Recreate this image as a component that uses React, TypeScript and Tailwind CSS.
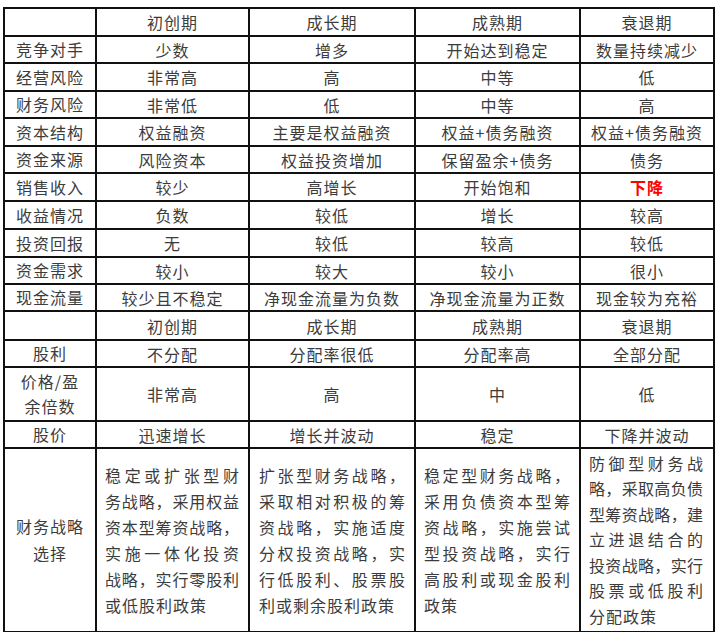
type Cell = string | { text: string; red?: boolean };

const stages = ['初创期', '成长期', '成熟期', '衰退期'];

// 各阶段对比（单行单元格）
const rows: { label: string[]; cells: Cell[] }[] = [
  { label: [''], cells: stages },
  { label: ['竞争对手'], cells: ['少数', '增多', '开始达到稳定', '数量持续减少'] },
  { label: ['经营风险'], cells: ['非常高', '高', '中等', '低'] },
  { label: ['财务风险'], cells: ['非常低', '低', '中等', '高'] },
  { label: ['资本结构'], cells: ['权益融资', '主要是权益融资', '权益+债务融资', '权益+债务融资'] },
  { label: ['资金来源'], cells: ['风险资本', '权益投资增加', '保留盈余+债务', '债务'] },
  { label: ['销售收入'], cells: ['较少', '高增长', '开始饱和', { text: '下降', red: true }] },
  { label: ['收益情况'], cells: ['负数', '较低', '增长', '较高'] },
  { label: ['投资回报'], cells: ['无', '较低', '较高', '较低'] },
  { label: ['资金需求'], cells: ['较小', '较大', '较小', '很小'] },
  { label: ['现金流量'], cells: ['较少且不稳定', '净现金流量为负数', '净现金流量为正数', '现金较为充裕'] },
  { label: [''], cells: stages },
  { label: ['股利'], cells: ['不分配', '分配率很低', '分配率高', '全部分配'] },
  { label: ['价格/盈', '余倍数'], cells: ['非常高', '高', '中', '低'] },
  { label: ['股价'], cells: ['迅速增长', '增长并波动', '稳定', '下降并波动'] },
];

// 财务战略选择：按原图逐行断开
const strategy = [
  {
    pad: 'pl-[8px] pr-[9px] leading-[26px]',
    lines: ['稳定或扩张型财', '务战略，采用权益', '资本型筹资战略，', '实施一体化投资', '战略，实行零股利', '或低股利政策'],
  },
  {
    pad: 'pl-[9px] pr-[9px] leading-[26px]',
    lines: ['扩张型财务战略，', '采取相对积极的筹', '资战略，实施适度', '分权投资战略，实', '行低股利、股票股', '利或剩余股利政策'],
  },
  {
    pad: 'pl-[8px] pr-[9px] leading-[26px]',
    lines: ['稳定型财务战略，', '采用负债资本型筹', '资战略，实施尝试', '型投资战略，实行', '高股利或现金股利', '政策'],
  },
  {
    pad: 'pl-[8px] pr-[10px] leading-[25.5px]',
    lines: ['防御型财务战', '略，采取高负债', '型筹资战略，建', '立进退结合的', '投资战略，实行', '股票或低股利', '分配政策'],
  },
];

function TextCell({ cell }: { cell: Cell }) {
  const text = typeof cell === 'string' ? cell : cell.text;
  const red = typeof cell !== 'string' && cell.red;
  return (
    <div className="bg-white flex items-center justify-center">
      <span className={red ? 'text-[#ff0000] font-bold' : ''}>{text}</span>
    </div>
  );
}

export default function App() {
  return (
    <div className="bg-white w-[718px] h-[632px] pt-[3px] pl-[3px] font-['Noto_Sans_CJK_SC',sans-serif] text-[16px] tracking-[1px] text-[#3c3c3c]">
      <div className="inline-grid bg-[#111] p-[2px] gap-[2px] grid-cols-[90px_151px_164px_163px_132px] grid-rows-[26px_25px_26px_25px_26px_25px_26px_26px_26px_25px_25px_27px_25px_52px_25px_182px]">
        {rows.map((row, ri) => (
          <div key={ri} className="contents">
            <div className="bg-white flex flex-col items-center justify-center leading-[25px]">
              {row.label.map((l, i) => (
                <span key={i}>{l}</span>
              ))}
            </div>
            {row.cells.map((c, ci) => (
              <TextCell key={ci} cell={c} />
            ))}
          </div>
        ))}

        {/* 财务战略选择 */}
        <div className="bg-white flex flex-col items-center justify-center leading-[27px]">
          <span>财务战略</span>
          <span>选择</span>
        </div>
        {strategy.map((col, ci) => (
          <div key={ci} className={`bg-white flex flex-col justify-center min-w-0 ${col.pad}`}>
            {col.lines.map((line, li) => (
              <div
                key={li}
                className={
                  li < col.lines.length - 1
                    ? 'whitespace-nowrap tracking-normal text-justify [text-align-last:justify]'
                    : 'whitespace-nowrap text-left'
                }
              >
                {line}
              </div>
            ))}
          </div>
        ))}
      </div>
    </div>
  );
}
